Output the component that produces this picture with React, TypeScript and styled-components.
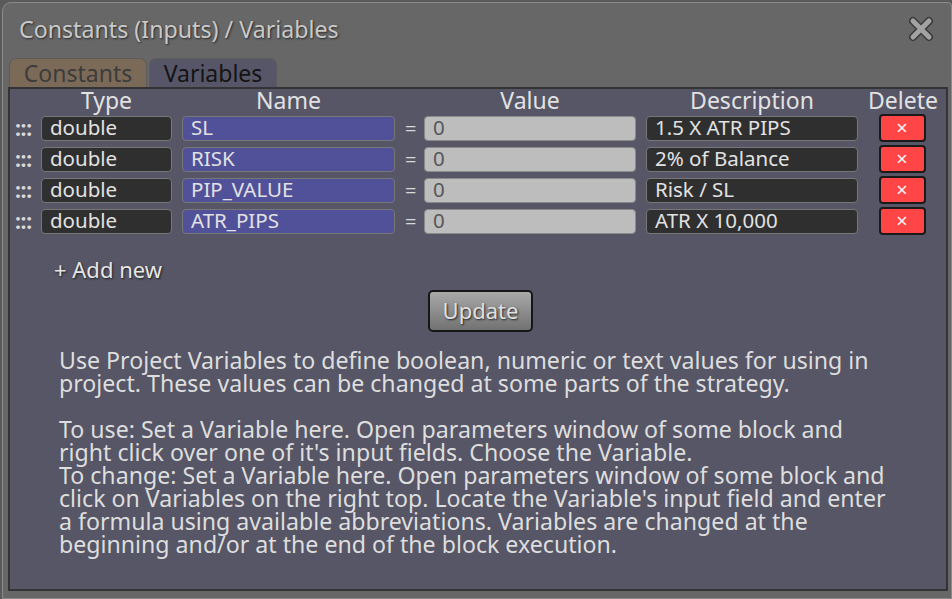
import React from "react";
import styled, { createGlobalStyle } from "styled-components";

const Global = createGlobalStyle`
  html, body { margin: 0; padding: 0; }
  body {
    background: #5a5a5a;
    font-family: "Noto Sans", "Open Sans", sans-serif;
    overflow: hidden;
  }
`;

const Window = styled.div`
  box-sizing: border-box;
  margin: 2px 0 0 2px;
  width: 950px;
  height: 597px;
  background: #676767;
  border: 1px solid #8a8a8a;
  border-top-left-radius: 9px;
  border-top-right-radius: 4px;
  display: flex;
  flex-direction: column;
`;

const TitleBar = styled.div`
  height: 55px;
  display: flex;
  align-items: center;
  justify-content: space-between;
  padding: 0 17px 4px 16px;
  box-sizing: border-box;
`;

const Title = styled.div`
  font-size: 23.2px;
  color: #c9c9c9;
  text-shadow: 1px 1px 2px #2a2a2a;
`;

const CloseBtn = styled.div`
  width: 26px;
  height: 26px;
  display: flex;
`;

const Tabs = styled.div`
  display: flex;
  gap: 2px;
  padding-left: 6px;
  height: 29px;
  align-items: flex-end;
`;

const Tab = styled.div<{ $active?: boolean }>`
  box-sizing: border-box;
  height: 29px;
  width: ${(p) => (p.$active ? "128px" : "138px")};
  border: 1px solid #5c5c5c;
  border-bottom: none;
  border-radius: 7px 7px 0 0;
  background: ${(p) => (p.$active ? "#565668" : "#7b6a57")};
  color: ${(p) => (p.$active ? "#141414" : "#3c3c3c")};
  font-size: 23px;
  line-height: 28px;
  text-align: center;
`;

const Panel = styled.div`
  box-sizing: border-box;
  margin: 0 3px 7px 5px;
  flex: 1;
  background: #565666;
  border: 2px solid #343434;
  padding: 0 0 0 3px;
  display: flex;
  flex-direction: column;
`;

const Grid = styled.div`
  display: grid;
  grid-template-columns: 18px 131px 213px 9px 212px 212px 68px;
  column-gap: 10px;
  row-gap: 3px;
  align-items: center;
`;

const Head = styled.div`
  font-size: 23px;
  line-height: 22px;
  color: #e2e2e2;
  text-align: center;
  height: 22px;
  white-space: nowrap;
`;

const Handle = styled.div`
  font-size: 21px;
  font-weight: bold;
  line-height: 22px;
  color: #dadada;
  padding-left: 2px;
  letter-spacing: -0.3px;
`;

const Field = styled.div<{ $kind: "dark" | "name" | "value" }>`
  box-sizing: border-box;
  height: 25px;
  border-radius: 4px;
  border: 1px solid ${(p) => (p.$kind === "value" ? "#8a8a8a" : "#777")};
  background: ${(p) =>
    p.$kind === "name" ? "#51519a" : p.$kind === "value" ? "#bdbdbd" : "#2f2f2f"};
  color: ${(p) => (p.$kind === "value" ? "#575757" : "#e2e2e2")};
  font-size: 20.5px;
  line-height: 21px;
  padding-left: 8px;
  white-space: nowrap;
`;

const Eq = styled.div`
  font-size: 20px;
  color: #d8d8d8;
  text-align: center;
`;

const DelCell = styled.div`
  display: flex;
  justify-content: center;
`;

const DelBtn = styled.div`
  box-sizing: border-box;
  width: 47px;
  height: 28px;
  background: #ff4545;
  border: 2px solid #1a1a1a;
  border-radius: 4px;
  color: #f4f4f4;
  font-size: 20px;
  line-height: 23px;
  text-align: center;
`;

const AddNew = styled.div`
  margin: 19px 0 0 41px;
  font-size: 22px;
  color: #e6e6e6;
  text-shadow: 1px 1px 2px #1e1e1e;
`;

const UpdateRow = styled.div`
  display: flex;
  justify-content: center;
  margin-top: 6px;
  padding-left: 2px;
`;

const UpdateBtn = styled.div`
  box-sizing: border-box;
  width: 105px;
  height: 42px;
  border: 2px solid #161616;
  border-radius: 5px;
  background: linear-gradient(#a9a9a9, #727272);
  color: #e0e0e0;
  font-size: 22px;
  line-height: 37px;
  text-align: center;
  text-shadow: 1px 1px 2px #222;
`;

const Help = styled.div`
  margin: 17px 0 0 46px;
  font-size: 23.15px;
  line-height: 23px;
  color: #dedede;
  white-space: nowrap;
`;

const Gap = styled.div`
  height: 23px;
`;

type Row = { name: string; desc: string };
const rows: Row[] = [
  { name: "SL", desc: "1.5 X ATR PIPS" },
  { name: "RISK", desc: "2% of Balance" },
  { name: "PIP_VALUE", desc: "Risk / SL" },
  { name: "ATR_PIPS", desc: "ATR X 10,000" },
];

const CloseIcon = () => (
  <svg width="26" height="26" viewBox="0 0 26 26">
    <g strokeLinecap="round">
      <path d="M5 5 L21 21 M21 5 L5 21" stroke="#3a3a3a" strokeWidth="8" />
      <path d="M5 5 L21 21 M21 5 L5 21" stroke="#a2a2a2" strokeWidth="5" />
    </g>
  </svg>
);

export default function App() {
  return (
    <>
      <Global />
      <Window>
        <TitleBar>
          <Title>Constants (Inputs) / Variables</Title>
          <CloseBtn>
            <CloseIcon />
          </CloseBtn>
        </TitleBar>
        <Tabs>
          <Tab>Constants</Tab>
          <Tab $active>Variables</Tab>
        </Tabs>
        <Panel>
          <Grid>
            <div />
            <Head>Type</Head>
            <Head>Name</Head>
            <div />
            <Head>Value</Head>
            <Head>Description</Head>
            <Head>Delete</Head>
            {rows.map((r) => (
              <React.Fragment key={r.name}>
                <Handle>:::</Handle>
                <Field $kind="dark">double</Field>
                <Field $kind="name">{r.name}</Field>
                <Eq>=</Eq>
                <Field $kind="value">0</Field>
                <Field $kind="dark">{r.desc}</Field>
                <DelCell>
                  <DelBtn>×</DelBtn>
                </DelCell>
              </React.Fragment>
            ))}
          </Grid>
          <AddNew>+ Add new</AddNew>
          <UpdateRow>
            <UpdateBtn>Update</UpdateBtn>
          </UpdateRow>
          <Help>
            Use Project Variables to define boolean, numeric or text values for using in
            <br />
            project. These values can be changed at some parts of the strategy.
            <Gap />
            To use: Set a Variable here. Open parameters window of some block and
            <br />
            right click over one of it's input fields. Choose the Variable.
            <br />
            To change: Set a Variable here. Open parameters window of some block and
            <br />
            click on Variables on the right top. Locate the Variable's input field and enter
            <br />
            a formula using available abbreviations. Variables are changed at the
            <br />
            beginning and/or at the end of the block execution.
          </Help>
        </Panel>
      </Window>
    </>
  );
}
